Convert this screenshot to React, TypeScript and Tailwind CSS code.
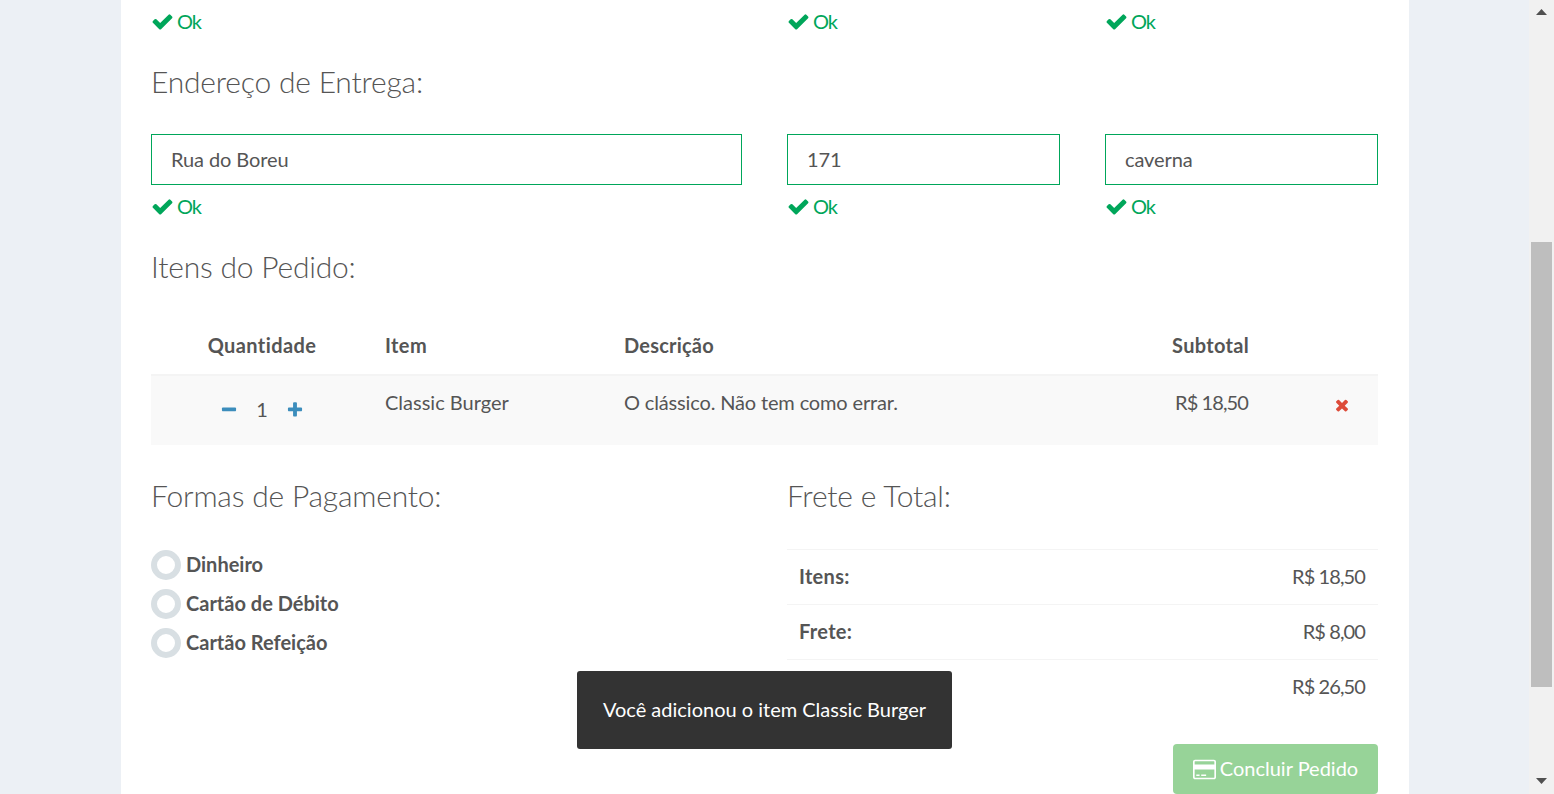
import React from "react";

const CHECK =
  "M1671 566q0 40-28 68l-724 724-136 136q-28 28-68 28t-68-28l-136-136-362-362q-28-28-28-68t28-68l136-136q28-28 68-28t68 28l294 295 656-657q28-28 68-28t68 28l136 136q28 28 28 68z";
const TIMES =
  "M1490 1322q0 40-28 68l-136 136q-28 28-68 28t-68-28l-294-294-294 294q-28 28-68 28t-68-28l-136-136q-28-28-28-68t28-68l294-294-294-294q-28-28-28-68t28-68l136-136q28-28 68-28t68 28l294 294 294-294q28-28 68-28t68 28l136 136q28 28 28 68t-28 68l-294 294 294 294q28 28 28 68z";
const PLUS =
  "M1600 736v192q0 40-28 68t-68 28h-416v416q0 40-28 68t-68 28h-192q-40 0-68-28t-28-68v-416h-416q-40 0-68-28t-28-68v-192q0-40 28-68t68-28h416v-416q0-40 28-68t68-28h192q40 0 68 28t28 68v416h416q40 0 68 28t28 68z";
const MINUS =
  "M1600 736v192q0 40-28 68t-68 28h-1216q-40 0-68-28t-28-68v-192q0-40 28-68t68-28h1216q40 0 68 28t28 68z";
const CARD =
  "M1632 128q66 0 113 47t47 113v1216q0 66-47 113t-113 47h-1472q-66 0-113-47t-47-113v-1216q0-66 47-113t113-47h1472zm-1472 128q-13 0-22.5 9.5t-9.5 22.5v224h1536v-224q0-13-9.5-22.5t-22.5-9.5h-1472zm1472 1280q13 0 22.5-9.5t9.5-22.5v-608h-1536v608q0 13 9.5 22.5t22.5 9.5h1472zm-1376-128v-128h256v128h-256zm384 0v-128h384v128h-384z";

const Icon = ({ d, size, className }: { d: string; size: number; className?: string }) => (
  <svg width={size} height={size} viewBox="0 0 1792 1792" fill="currentColor" className={className}>
    <path d={d} />
  </svg>
);

const Ok = () => (
  <div className="flex items-center h-[30px] text-[#00a65a] text-[20px] leading-[30px]">
    <Icon d={CHECK} size={23} className="mr-[3px]" />
    <span className="tracking-[-1px]">Ok</span>
  </div>
);

const Field = ({ value }: { value: string }) => (
  <div className="h-[51px] border border-[#00a65a] flex items-center pl-[19px] pb-[2px] text-[20px] tracking-[-0.1px] text-[#555]">{value}</div>
);

const Heading = ({ children }: { children: React.ReactNode }) => (
  <h3 className="h-[40px] text-[30px] leading-[40px] font-light tracking-[-0.2px] text-[#555]">{children}</h3>
);

const Radio = ({ label }: { label: string }) => (
  <div className="flex items-center h-[39px]">
    <span className="w-[30px] h-[30px] rounded-full border-[6px] border-[#d8dfe3] bg-white mr-[5px]" />
    <span className="font-bold text-[20px] pb-[2px] text-[#555]">{label}</span>
  </div>
);

const totals = [
  { id: 1, label: "Itens:", value: "R$ 18,50" },
  { id: 2, label: "Frete:", value: "R$ 8,00" },
  { id: 3, label: "Total:", value: "R$ 26,50" },
];

export default function App() {
  return (
    <div className="relative flex h-screen overflow-hidden bg-[#ecf0f5] font-['Lato',sans-serif]">
      <div className="flex-1 min-w-0 px-[121px] pr-[120px]">
        <main className="bg-white h-full pl-[30px] pr-[31px]">
          <div className="flex gap-[45px] pt-[6px]">
            <div className="w-[591px]"><Ok /></div>
            <div className="flex-1"><Ok /></div>
            <div className="flex-1"><Ok /></div>
          </div>

          <div className="mt-[25px]"><Heading>Endereço de Entrega:</Heading></div>

          <div className="flex gap-[45px] mt-[33px]">
            <div className="w-[591px]">
              <Field value="Rua do Boreu" />
              <div className="mt-[6px]"><Ok /></div>
            </div>
            <div className="flex-1">
              <Field value="171" />
              <div className="mt-[6px]"><Ok /></div>
            </div>
            <div className="flex-1">
              <Field value="caverna" />
              <div className="mt-[6px]"><Ok /></div>
            </div>
          </div>

          <div className="mt-[25px]"><Heading>Itens do Pedido:</Heading></div>

          <table className="w-full table-fixed mt-[39px] text-[20px] text-[#555]">
            <thead>
              <tr className="h-[50px] border-b-2 border-[#f4f4f4]">
                <th className="w-[222px] text-center font-bold tracking-[0.4px] pb-[9px]">Quantidade</th>
                <th className="w-[239px] text-left font-bold tracking-[0.4px] pl-[12px] pb-[9px]">Item</th>
                <th className="text-left font-bold tracking-[0.2px] pl-[12px] pb-[9px]">Descrição</th>
                <th className="w-[102px] text-right font-bold tracking-[0.3px] pr-[12px] pb-[9px]">Subtotal</th>
                <th className="w-[117px]" />
              </tr>
            </thead>
            <tbody>
              <tr className="h-[70px] bg-[#f9f9f9]">
                <td className="align-top pt-[22px]">
                  <div className="flex items-center justify-center">
                    <Icon d={MINUS} size={18} className="mt-[2px] text-[#3c8dbc]" />
                    <span className="mx-[18px] leading-[22px]">1</span>
                    <Icon d={PLUS} size={18} className="mt-[2px] text-[#3c8dbc]" />
                  </div>
                </td>
                <td className="align-top pl-[12px] pt-[14px] leading-[24px]">Classic Burger</td>
                <td className="align-top pl-[12px] pt-[14px] leading-[24px] tracking-[-0.15px]">O clássico. Não tem como errar.</td>
                <td className="align-top pr-[13px] pt-[14px] leading-[24px] text-right tracking-[-0.9px]">R$ 18,50</td>
                <td className="align-top pt-[20px]">
                  <div className="flex justify-end pr-[27px]">
                    <Icon d={TIMES} size={18} className="text-[#dd4b39]" />
                  </div>
                </td>
              </tr>
            </tbody>
          </table>

          <div className="flex gap-[45px] mt-[30px]">
            <div className="w-[591px]">
              <Heading>Formas de Pagamento:</Heading>
              <div className="mt-[30px]">
                <Radio label="Dinheiro" />
                <Radio label="Cartão de Débito" />
                <Radio label="Cartão Refeição" />
              </div>
            </div>
            <div className="flex-1">
              <Heading>Frete e Total:</Heading>
              <div className="mt-[34px] text-[20px] text-[#555]">
                {totals.map(({ id, label, value }) => (
                  <div key={id} className="flex justify-between items-center h-[55px] pl-[12px] pr-[13px] pb-[2px] border-t border-[#f4f4f4]">
                    <span className="font-bold tracking-[0.3px]">{label}</span>
                    <span className="tracking-[-0.9px]">{value}</span>
                  </div>
                ))}
              </div>
              <div className="flex justify-end mt-[30px]">
                <button className="flex items-center justify-center w-[205px] h-[50px] rounded-[4px] bg-[#97d398] text-white text-[20px]">
                  <Icon d={CARD} size={23} className="mr-[4px]" />
                  <span className="pb-[2px]">Concluir Pedido</span>
                </button>
              </div>
            </div>
          </div>
        </main>
      </div>

      <div className="w-[25px] shrink-0 bg-[#f1f1f1] flex flex-col items-end">
        <div className="h-[242px] w-full flex justify-center pt-[9px]">
          <svg width="11" height="7" viewBox="0 0 11 7"><path d="M5.5 0 11 6H0z" fill="#505050" /></svg>
        </div>
        <div className="w-[21px] h-[445px] mr-[2px] bg-[#bebebe]" />
        <div className="flex-1 w-full flex justify-center items-end pb-[9px]">
          <svg width="11" height="7" viewBox="0 0 11 7"><path d="M0 0h11L5.5 6z" fill="#505050" /></svg>
        </div>
      </div>

      <div className="absolute left-[577px] top-[671px] w-[375px] h-[78px] rounded-[3px] bg-[#333] text-white text-[20px] pb-[2px] flex items-center justify-center">
        Você adicionou o item Classic Burger
      </div>
    </div>
  );
}
